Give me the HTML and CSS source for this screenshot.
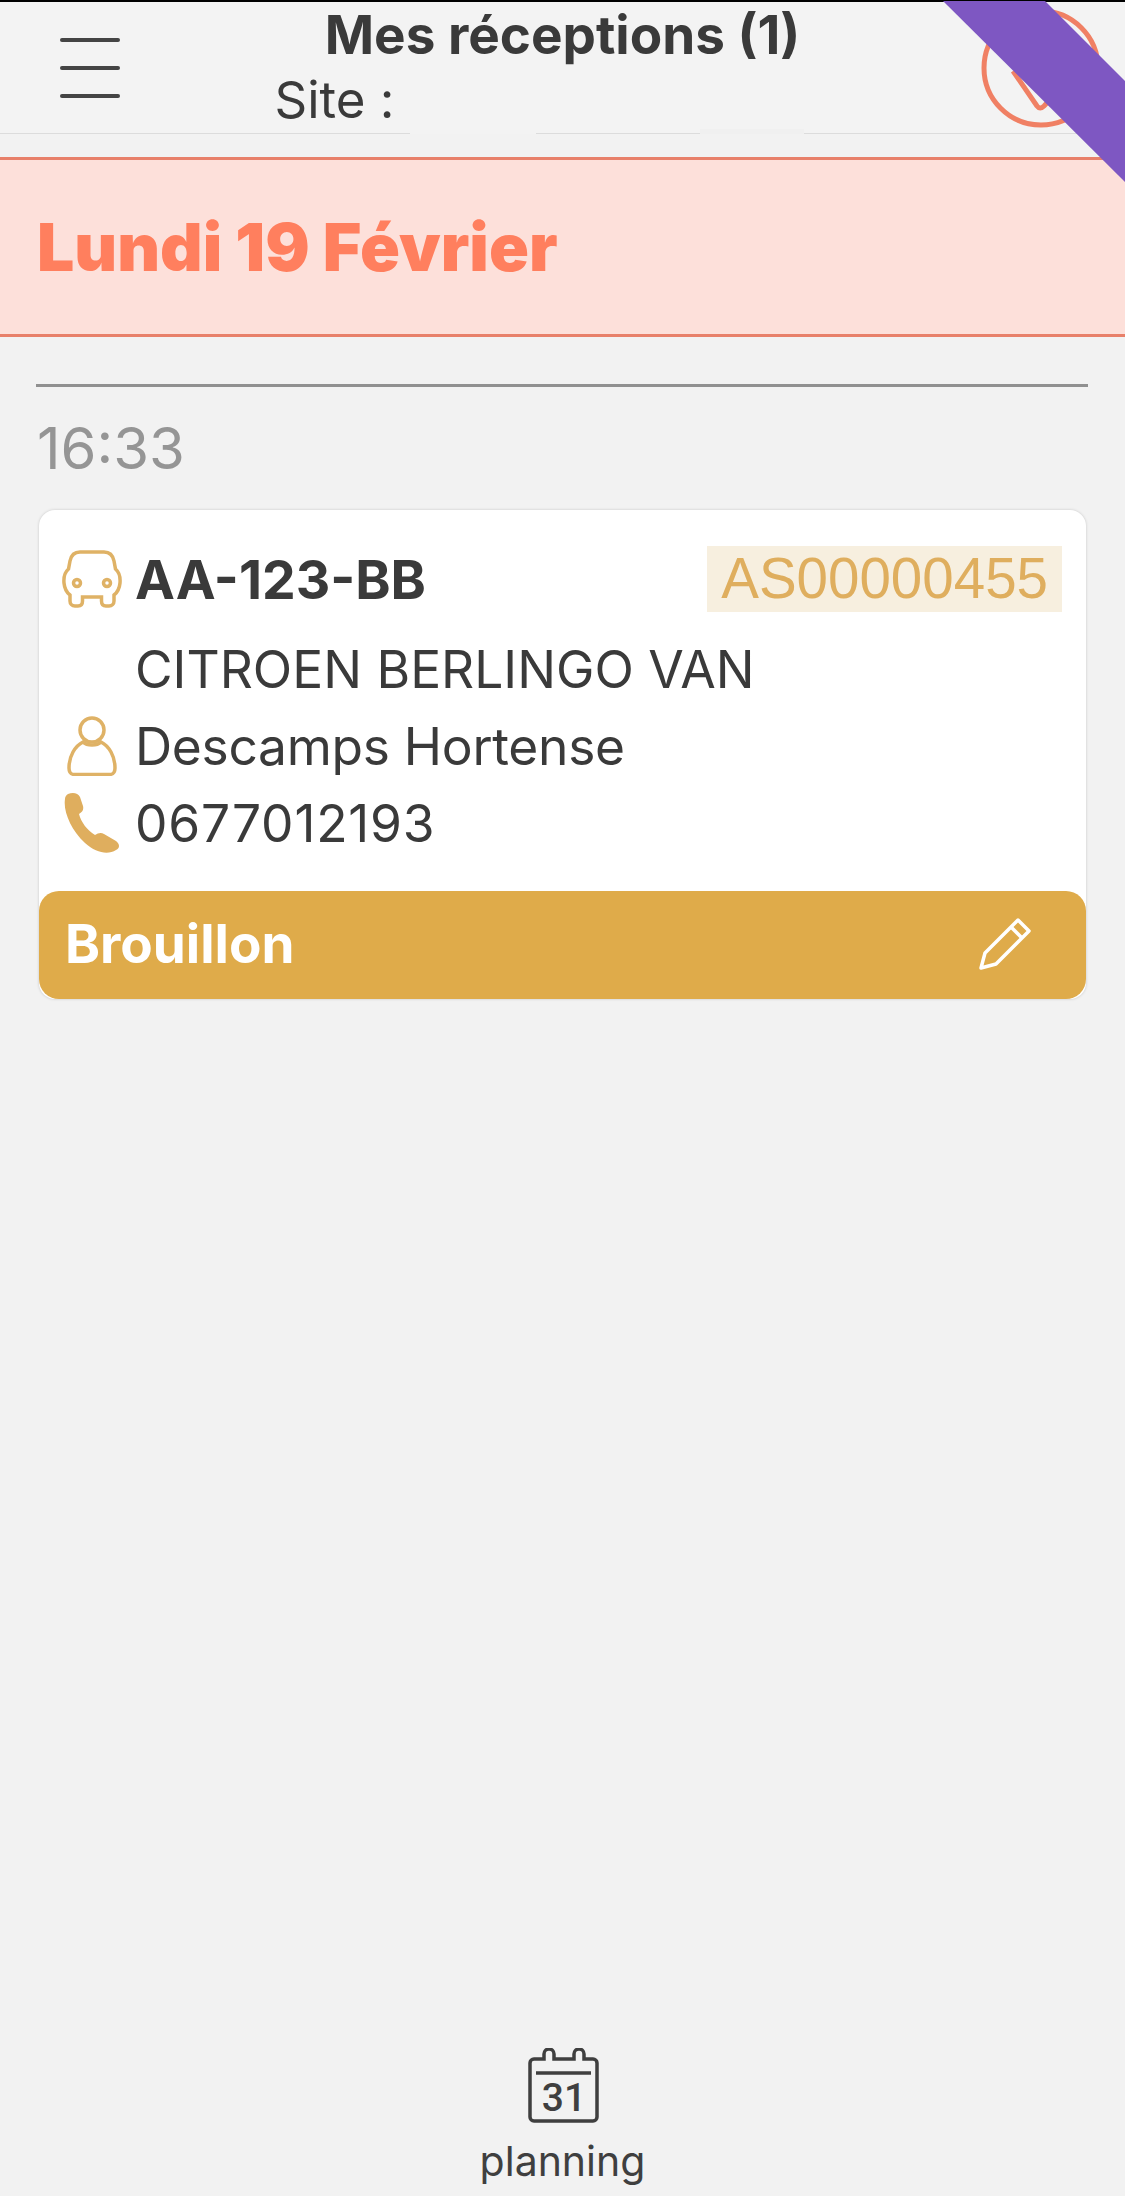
FILE: index.html
```html
<!DOCTYPE html>
<html lang="fr">
<head>
    <meta charset="UTF-8">
    <title>Mes réceptions</title>
    <link rel="stylesheet" href="styles.css">
</head>
<body>
    <div class="page">
        <header class="topbar">
            <div class="menu"><span></span><span></span><span></span></div>
            <div class="heading">
                <div class="title">Mes réceptions (1)</div>
                <div class="site">Site :</div>
            </div>
            <div class="topbar-right">
                <svg class="round-icon" width="124" height="124" viewBox="0 0 124 124">
                    <circle cx="62" cy="62" r="57" fill="none" stroke="#f08064" stroke-width="5"/>
                    <path d="M34 65 L58 100 Q61 104 65 100 L81 83" fill="none" stroke="#f08064" stroke-width="5"/>
                </svg>
            </div>
            <div class="site-mask"></div>
            <div class="site-mask second"></div>
        </header>
        <div class="ribbon"></div>

        <div class="day-band">Lundi 19 Février</div>

        <main class="content">
            <div class="divider"></div>
            <div class="time">16:33</div>
            <div class="card">
                <div class="card-body">
                    <div class="row row-first">
                        <span class="row-icon">
                            <svg width="60" height="58" viewBox="0 0 60 58" fill="none" stroke="#dfb266" stroke-width="3.500">
                                <path d="M18 2H42C48 2 51 6 52 11L53.500 19C57 22 58.500 27 58 33 57.500 38 56 42 52 45V51C52 54 50 56 47 56H44C41 56 39.500 54 39.500 51V47H20.500V51C20.500 54 19 56 16 56H13C10 56 8 54 8 51V45C4 42 2.500 38 2 33 1.500 27 3 22 6.500 19L8 11C9 6 12 2 18 2Z"/>
                                <circle cx="15" cy="33" r="3.500"/>
                                <circle cx="45" cy="33" r="3.500"/>
                            </svg>
                        </span>
                        <span class="plate">AA-123-BB</span>
                        <span class="ref">AS00000455</span>
                    </div>
                    <div class="row row-model">
                        <span class="row-icon"></span>
                        <span>CITROEN BERLINGO VAN</span>
                    </div>
                    <div class="row">
                        <span class="row-icon">
                            <svg width="50" height="60" viewBox="0 0 50 60" fill="none" stroke="#dfb266" stroke-width="3.500">
                                <circle cx="25" cy="14" r="12"/>
                                <path d="M16 26C8 30 2 40 2 52c0 5 2 6.500 6 6.500h34c4 0 6-1.500 6-6.500C48 40 42 30 34 26c-4 4-14 4-18 0z"/>
                            </svg>
                        </span>
                        <span class="name">Descamps Hortense</span>
                    </div>
                    <div class="row">
                        <span class="row-icon">
                            <svg width="56" height="60" viewBox="0 0 56 60" fill="#dfae5e">
                                <path d="M4 1C9-1 14 0 16 4l3 9c1 4-1 6-4 8 2 8 8 16 16 21 3-2 6-3 9-1l12 7c4 3 4 7 0 9-8 5-20 3-31-7C7 37-1 18 1 6c0-2 1-4 3-5z"/>
                            </svg>
                        </span>
                        <span class="phone">0677012193</span>
                    </div>
                </div>
                <div class="status">
                    <span>Brouillon</span>
                    <svg width="53" height="54" viewBox="0 0 53 54" fill="none" stroke="#fff" stroke-width="3.500" stroke-linejoin="round">
                        <path d="M3 51 7 36 40 3 51 14 18 47z"/>
                        <path d="M33 10 44 21"/>
                    </svg>
                </div>
            </div>
        </main>

        <footer class="bottom-nav">
            <svg width="71" height="75" viewBox="0 0 71 75">
                <path d="M16 11H6a4 4 0 0 0-4 4v54a4 4 0 0 0 4 4h59a4 4 0 0 0 4-4V15a4 4 0 0 0-4-4H56V6a5 5 0 0 0-10 0v5H26V6a5 5 0 0 0-10 0z" fill="none" stroke="#3f3f3f" stroke-width="3.500"/>
                <path d="M8 25H63" stroke="#3f3f3f" stroke-width="3.500"/>
                <text x="36" y="63" class="cal-day">31</text>
            </svg>
            <div class="nav-label">planning</div>
        </footer>
    </div>
</body>
</html>
```

FILE: styles.css
```css
body { margin: 0; background: #f2f2f2; font-family: Inter, "Liberation Sans", sans-serif; color: #3a3a3a; }
.page { position: relative; height: 2196px; overflow: hidden; display: flex; flex-direction: column; }

.topbar { position: relative; height: 134px; box-sizing: border-box; border-top: 2px solid #000; border-bottom: 1px solid #dcdcdc; background: #f3f3f3; display: grid; grid-template-columns: 1fr 572px 1fr; align-items: center; }
.menu { display: flex; flex-direction: column; gap: 24px; padding-left: 60px; }
.menu span { display: block; width: 60px; height: 4px; background: #444; border-radius: 2px; }
.title { font-size: 53px; font-weight: 700; line-height: 64px; text-align: center; white-space: nowrap; }
.site { font-size: 51px; line-height: 65px; margin-left: -2px; }
.topbar-right { display: flex; justify-content: flex-end; padding-right: 22px; }
.round-icon { display: block; }
.site-mask { position: absolute; left: 410px; bottom: -1px; width: 126px; height: 5px; background: #f3f3f3; }
.site-mask.second { left: 700px; width: 104px; background: #f0f0f0; }
.ribbon { position: absolute; top: 0; right: 0; width: 182px; height: 182px; background: #7e57c2; clip-path: polygon(0 1px, 102px 1px, 182px 81px, 182px 182px); }

.day-band { margin-top: 23px; height: 180px; box-sizing: border-box; border-top: 3px solid #e8806a; border-bottom: 3px solid #e8806a; background: #fde0da; color: #ff7f5e; font-size: 66px; font-weight: 900; line-height: 174px; padding-left: 37px; }

.content { padding: 47px 37px 0 36px; }
.divider { height: 3px; background: #909090; }
.time { font-size: 58px; line-height: 122px; color: #959595; margin-bottom: 1px; padding-left: 1px; }

.card { margin: 0 2px 0 3px; background: #fff; border-radius: 16px; box-shadow: 0 0 3px rgba(0,0,0,0.18); }
.card-body { padding: 36px 24px 30px 10px; }
.row { display: flex; align-items: center; height: 77px; font-size: 51.500px; }
.row-first { height: 66px; }
.row-model { margin-top: 18px; }
.row-icon { width: 86px; flex: none; display: flex; justify-content: center; }
.row-icon svg { display: block; }
.plate { font-size: 53.500px; font-weight: 700; flex: 1; }
.name { letter-spacing: -0.300px; }
.phone { letter-spacing: 0.800px; }
.ref { font-family: "Liberation Sans", sans-serif; font-size: 56.500px; line-height: 66px; padding: 0 14px; background: #f7efdf; color: #dfae5e; }

.status { height: 108px; box-sizing: border-box; border-radius: 20px; background: #dfab4a; color: #fff; font-size: 53px; font-weight: 700; display: flex; align-items: center; justify-content: space-between; padding: 0 55px 3px 26px; }
.status svg { display: block; }

.bottom-nav { margin-top: auto; display: flex; flex-direction: column; align-items: center; padding-bottom: 1px; color: #3f3f3f; }
.bottom-nav svg { display: block; margin-left: 2px; }
.cal-day { font-family: Roboto, sans-serif; font-size: 39px; font-weight: 500; text-anchor: middle; fill: #3f3f3f; }
.nav-label { font-size: 41px; line-height: 67px; padding-top: 5px; }
```
